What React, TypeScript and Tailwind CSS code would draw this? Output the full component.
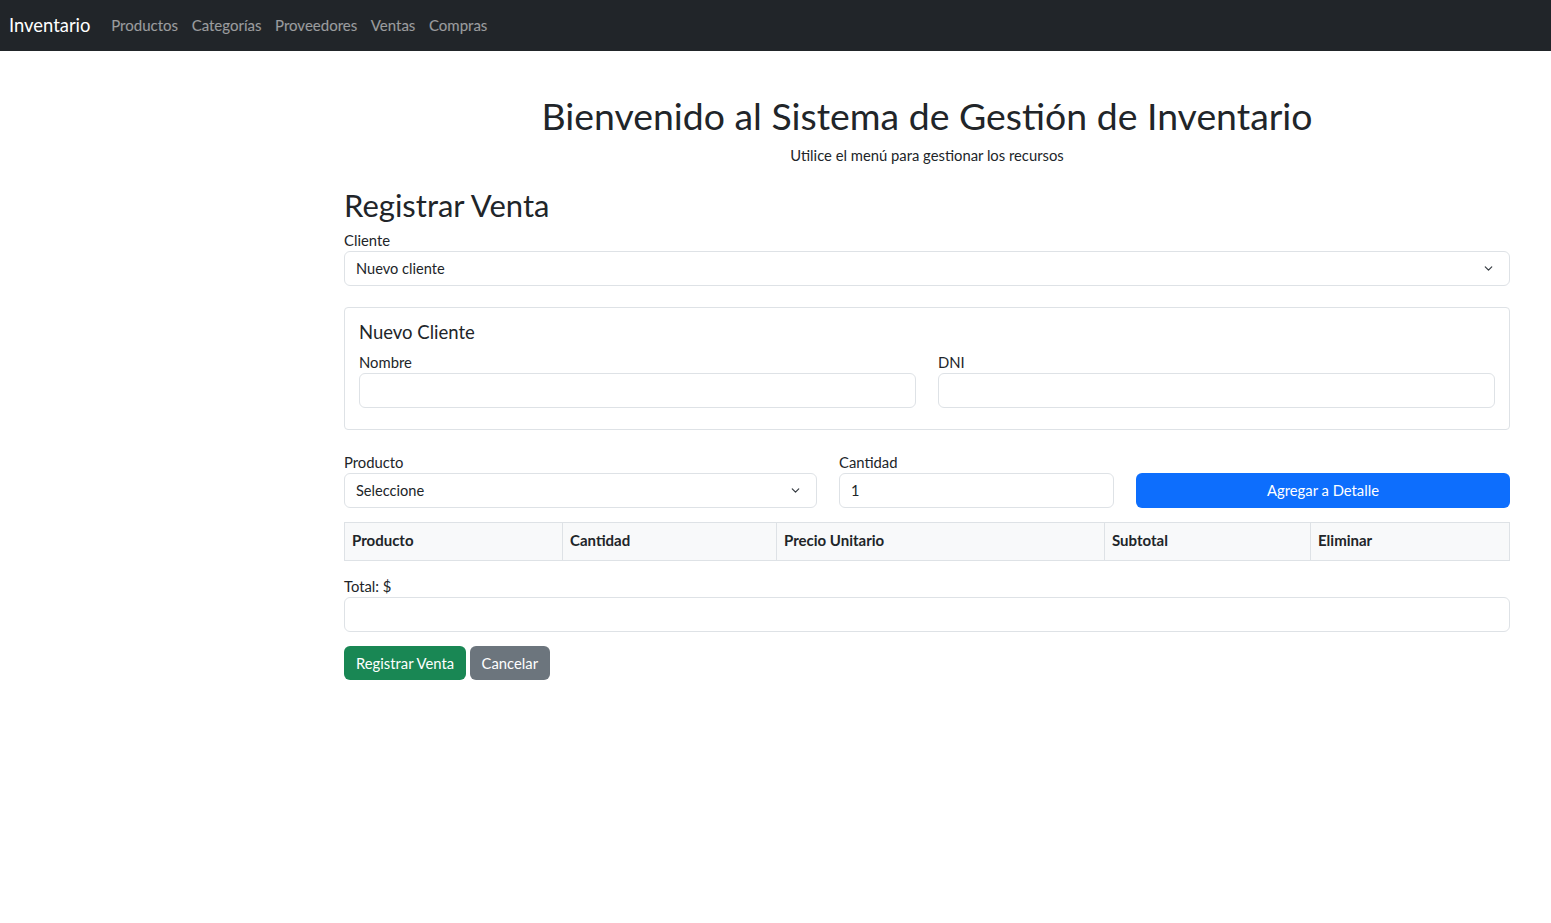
import { ChevronDown } from "lucide-react";

const navLinks = ["Productos", "Categorías", "Proveedores", "Ventas", "Compras"];
const columns = [
  { name: "Producto", w: "w-[218px]" },
  { name: "Cantidad", w: "w-[214px]" },
  { name: "Precio Unitario", w: "w-[328px]" },
  { name: "Subtotal", w: "w-[206px]" },
  { name: "Eliminar", w: "" },
];

function Select({ value }: { value: string }) {
  return (
    <div className="flex h-[35px] items-center justify-between rounded-[6px] border border-[#dee2e6] bg-white pl-[11px] pr-[14px] text-[14.6px]">
      <span>{value}</span>
      <ChevronDown className="h-[13px] w-[13px] text-[#343a40]" strokeWidth={2.2} />
    </div>
  );
}

function Input({ value = "" }: { value?: string }) {
  return (
    <div className="flex h-[35px] items-center rounded-[6px] border border-[#dee2e6] bg-white pl-[11px] text-[14.6px]">
      {value}
    </div>
  );
}

function Label({ children }: { children: React.ReactNode }) {
  return <div className="mb-[2px] h-[18px] text-[14.8px] leading-[18px]">{children}</div>;
}

export default function App() {
  return (
    <div className="min-h-[923px] bg-white font-['Lato',sans-serif] text-[#212529]">
      <nav className="flex h-[51px] items-center bg-[#212529] pl-[9px]">
        <span className="mr-[14px] text-[18.4px] text-white">Inventario</span>
        {navLinks.map((l) => (
          <span key={l} className="px-[6.8px] text-[15px] text-white/55">
            {l}
          </span>
        ))}
      </nav>

      <main className="ml-[344px] mr-[41px]">
        <div className="pt-[43px] text-center">
          <h1 className="text-[37.4px] leading-[44px]">Bienvenido al Sistema de Gestión de Inventario</h1>
          <p className="mt-[7px] text-[14.8px] leading-[20px]">Utilice el menú para gestionar los recursos</p>
        </div>

        <h2 className="mt-[21px] text-[31px] leading-[38px]">Registrar Venta</h2>
        <div className="mt-[7px]">
          <Label>Cliente</Label>
          <Select value="Nuevo cliente" />
        </div>

        <div className="mt-[21px] rounded-[4px] border border-[#dee2e6] px-[14px] pb-[21px] pt-[12px]">
          <h5 className="text-[18.5px] leading-[24px]">Nuevo Cliente</h5>
          <div className="mt-[9px] grid grid-cols-2 gap-x-[22px]">
            <div>
              <Label>Nombre</Label>
              <Input />
            </div>
            <div>
              <Label>DNI</Label>
              <Input />
            </div>
          </div>
        </div>

        <div className="mt-[23px] grid grid-cols-12 gap-x-[22px]">
          <div className="col-span-5">
            <Label>Producto</Label>
            <Select value="Seleccione" />
          </div>
          <div className="col-span-3">
            <Label>Cantidad</Label>
            <Input value="1" />
          </div>
          <div className="col-span-4 flex items-end">
            <button className="h-[35px] w-full rounded-[6px] bg-[#0d6efd] text-[14.8px] text-white">
              Agregar a Detalle
            </button>
          </div>
        </div>

        <table className="mt-[14px] w-full border-collapse">
          <thead>
            <tr className="h-[38px] bg-[#f8f9fa]">
              {columns.map((c) => (
                <th
                  key={c.name}
                  className={`${c.w} border border-[#dee2e6] px-[7px] pb-[3px] text-left text-[15px] font-bold`}
                >
                  {c.name}
                </th>
              ))}
            </tr>
          </thead>
        </table>

        <div className="mt-[16px]">
          <Label>Total: $</Label>
          <Input />
        </div>

        <div className="mt-[14px] flex gap-[4px]">
          <button className="h-[34px] rounded-[6px] bg-[#198754] px-[12px] text-[14.8px] text-white">
            Registrar Venta
          </button>
          <button className="h-[34px] rounded-[6px] bg-[#6c757d] px-[11.5px] text-[14.8px] text-white">
            Cancelar
          </button>
        </div>
      </main>
    </div>
  );
}
